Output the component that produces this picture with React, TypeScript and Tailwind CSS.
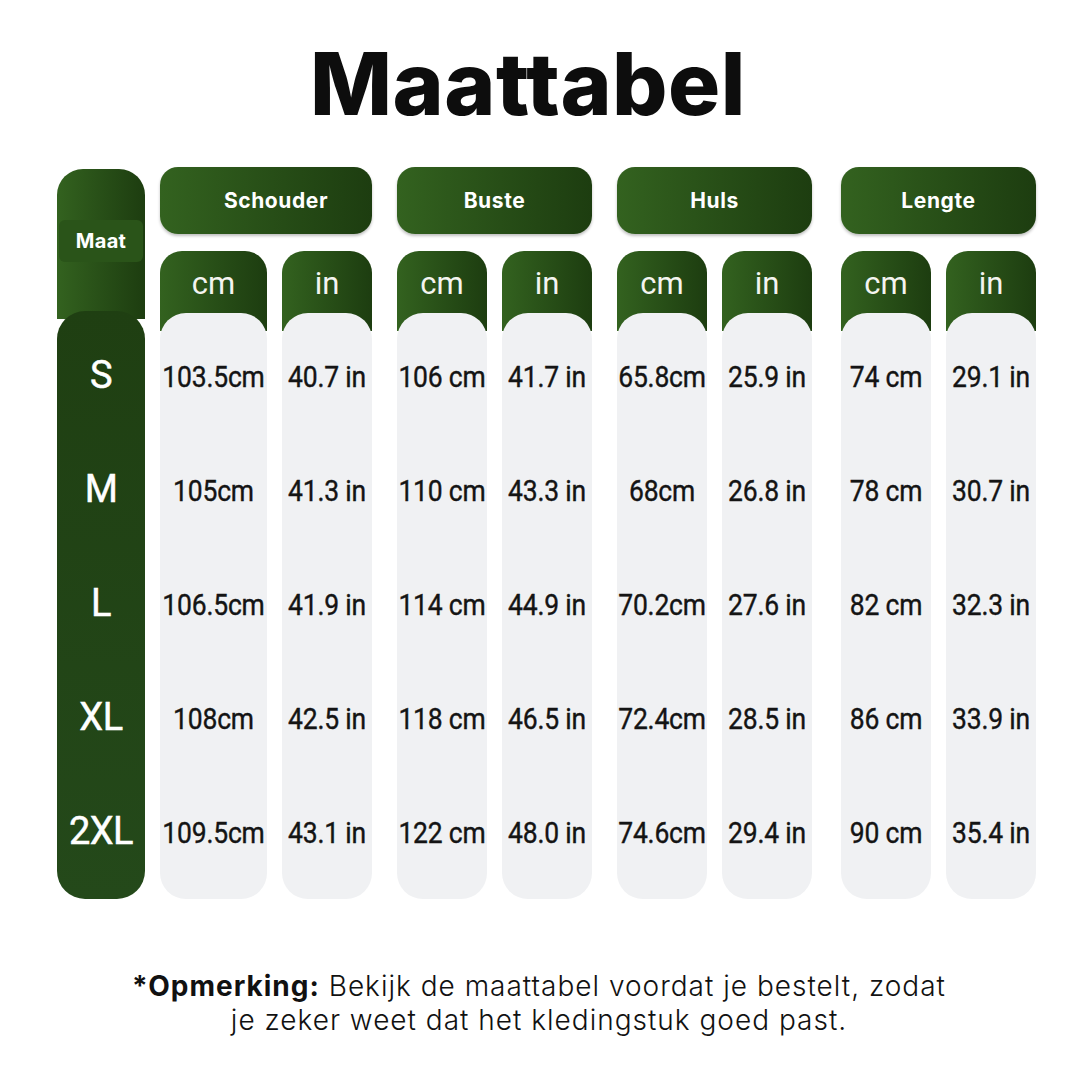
import React from 'react';

const groups = [
  { name: 'Schouder', cmW: 'w-[107px]', pad: 'pl-[20px]', cm: ['103.5cm', '105cm', '106.5cm', '108cm', '109.5cm'], inch: ['40.7 in', '41.3 in', '41.9 in', '42.5 in', '43.1 in'] },
  { name: 'Buste', cmW: 'w-[90px]', pad: '', cm: ['106 cm', '110 cm', '114 cm', '118 cm', '122 cm'], inch: ['41.7 in', '43.3 in', '44.9 in', '46.5 in', '48.0 in'] },
  { name: 'Huls', cmW: 'w-[90px]', pad: '', cm: ['65.8cm', '68cm', '70.2cm', '72.4cm', '74.6cm'], inch: ['25.9 in', '26.8 in', '27.6 in', '28.5 in', '29.4 in'] },
  { name: 'Lengte', cmW: 'w-[90px]', pad: '', cm: ['74 cm', '78 cm', '82 cm', '86 cm', '90 cm'], inch: ['29.1 in', '30.7 in', '32.3 in', '33.9 in', '35.4 in'] },
];

const sizes = ['S', 'M', 'L', 'XL', '2XL'];

const SubColumn = ({ label, values, width }: { label: string; values: string[]; width: string }) => (
  <div className={`flex flex-col ${width}`}>
    <div className="h-[80px] rounded-t-[22px] bg-linear-to-r from-[#33621f] to-[#1d3d10] flex justify-center pt-[17px]">
      <span className="text-[#f4f4f0] text-[31px] leading-none font-['Roboto',sans-serif]">{label}</span>
    </div>
    <div className="-mt-[18px] h-[586px] rounded-[26px] bg-[#f0f1f3] pt-[7px] flex flex-col">
      {values.map((v, i) => (
        <div key={i} className="h-[114px] flex items-center justify-center whitespace-nowrap">
          <span className="text-[26.5px] text-[#141414] font-normal font-['Roboto',sans-serif] tracking-[-0.2px] scale-y-[1.1] [-webkit-text-stroke:0.35px_#141414]">
            {v}
          </span>
        </div>
      ))}
    </div>
  </div>
);

export default function App() {
  return (
    <div className="w-[1080px] h-[1080px] bg-white flex flex-col items-center">
      <h1 className="mt-[40px] mr-[24px] text-[87px] leading-none font-extrabold text-[#0d0d0d] font-['Inter',sans-serif] tracking-[0.5px]">
        Maattabel
      </h1>

      <div className="mt-[42px] flex w-full pl-[57px]">
        {/* Maat column */}
        <div className="w-[88px] flex flex-col mr-[15px]">
          <div className="h-[150px] rounded-t-[26px] bg-linear-to-r from-[#33621f] to-[#1d3d10] flex flex-col justify-center items-center pb-[6px]">
            <div className="w-[84px] py-[6px] bg-[#2a5419] rounded-[6px] flex justify-center">
              <span className="text-white text-[20px] font-bold font-['Inter',sans-serif] tracking-[0.3px]">Maat</span>
            </div>
          </div>
          <div className="-mt-[8px] h-[588px] rounded-[28px] bg-linear-to-b from-[#1f3f12] to-[#24491a] pt-[7px] flex flex-col">
            {sizes.map((s) => (
              <div key={s} className="h-[114px] flex items-center justify-center text-white text-[38px] font-normal font-['Roboto',sans-serif] tracking-[-0.5px] [-webkit-text-stroke:0.5px_white]">
                {s}
              </div>
            ))}
          </div>
        </div>

        {groups.map((g, gi) => (
          <div
            key={g.name}
            className={`flex flex-col ${gi === 0 ? '' : gi === 3 ? 'ml-[29px]' : 'ml-[25px]'}`}
          >
            <div className={`h-[67px] -mt-[2px] rounded-[18px] bg-linear-to-r from-[#33621f] to-[#1d3d10] shadow-[0_2px_3px_rgba(0,0,0,0.25)] flex items-center justify-center ${g.pad}`}>
              <span className="text-white text-[21px] font-bold font-['Inter',sans-serif] tracking-[0.6px]">{g.name}</span>
            </div>
            <div className="mt-[17px] flex gap-[15px]">
              <SubColumn label="cm" values={g.cm} width={g.cmW} />
              <SubColumn label="in" values={g.inch} width="w-[90px]" />
            </div>
          </div>
        ))}
      </div>

      <p className="mt-[70px] mr-[2px] text-center text-[28px] leading-[34px] text-[#111] font-['Inter',sans-serif] font-light tracking-[1px]">
        <span className="font-bold">*Opmerking:</span> Bekijk de maattabel voordat je bestelt, zodat
        <br />
        je zeker weet dat het kledingstuk goed past.
      </p>
    </div>
  );
}
